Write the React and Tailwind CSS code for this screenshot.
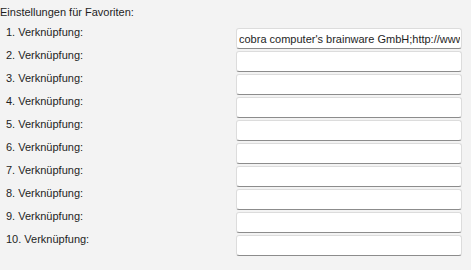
import React from 'react';

const rows = [
  { label: '1. Verknüpfung:', value: "cobra computer's brainware GmbH;http://www.cobra.de" },
  { label: '2. Verknüpfung:', value: '' },
  { label: '3. Verknüpfung:', value: '' },
  { label: '4. Verknüpfung:', value: '' },
  { label: '5. Verknüpfung:', value: '' },
  { label: '6. Verknüpfung:', value: '' },
  { label: '7. Verknüpfung:', value: '' },
  { label: '8. Verknüpfung:', value: '' },
  { label: '9. Verknüpfung:', value: '' },
  { label: '10. Verknüpfung:', value: '' },
];

const App = () => {
  return (
    <div className="w-[471px] h-[270px] bg-[#f3f3f3] overflow-hidden text-[#1e1e1e] text-[11px] font-['Liberation_Sans',Arial,sans-serif]">
      <div className="pt-[4px] h-[28px] leading-[16px]">Einstellungen für Favoriten:</div>
      <div className="flex flex-col">
        {rows.map((row) => (
          <div key={row.label} className="flex h-[23px]">
            <div className="w-[236px] pl-[6px] leading-[12px] -mt-[2px]">{row.label}</div>
            <input
              type="text"
              readOnly
              value={row.value}
              className="w-[226px] h-[21px] bg-white rounded-[3px] border border-[#dcdcdc] border-b-[#8c8c8c] pl-[2px] pr-[1px] pt-[1px] text-[11px] leading-[18px] text-[#1e1e1e] outline-none overflow-hidden"
            />
          </div>
        ))}
      </div>
    </div>
  );
};

export default App;
